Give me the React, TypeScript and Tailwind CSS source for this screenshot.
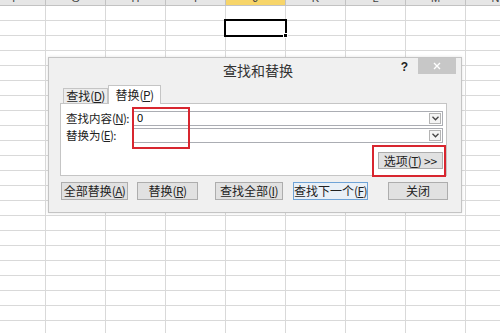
import React from "react";

const cols = ["F", "G", "H", "I", "J", "K", "L", "M", "N"];
const rows = Array.from({ length: 22 }, (_, i) => i);

const Key = ({ k }: { k: string }) => (
  <span className="tracking-[-0.6px]">
    (<span className="underline">{k}</span>)
  </span>
);

const DropBtn = () => (
  <div className="ml-auto mr-[1px] flex h-[11px] w-[12px] shrink-0 items-center justify-center border border-[#b4b4b4] bg-[#f4f4f4]">
    <svg width="7" height="5" viewBox="0 0 7 5">
      <path d="M0.5 0.8 L3.5 3.8 L6.5 0.8" fill="none" stroke="#444" strokeWidth="1.3" />
    </svg>
  </div>
);

const Btn = ({
  w,
  ml,
  primary,
  children,
}: {
  w: string;
  ml?: string;
  primary?: boolean;
  children: React.ReactNode;
}) => (
  <div
    className={`flex h-[18px] shrink-0 items-center justify-center whitespace-nowrap border text-[12px] leading-none text-[#222] ${w} ${ml ?? ""} ${
      primary ? "border-[#6fa3d6] bg-[#e9f0f7]" : "border-[#adadad] bg-[#e1e1e1]"
    }`}
  >
    {children}
  </div>
);

export default function App() {
  return (
    <div className="relative h-[333px] w-[500px] overflow-hidden bg-white font-['Noto_Sans_CJK_SC','Liberation_Sans',sans-serif]">
      {/* sheet */}
      <div className="ml-[-14px] mt-[-14px] flex flex-col">
        <div className="flex">
          {cols.map((c) => (
            <div
              key={c}
              className={`flex h-5 w-[60px] shrink-0 items-end justify-center border-r border-b border-[#c2c2c2] pb-[1px] font-['Liberation_Sans',sans-serif] text-[11px] leading-none text-[#444] ${
                c === "J" ? "bg-[#f7d56a]" : "bg-[#e6e6e6]"
              }`}
            >
              {c}
            </div>
          ))}
        </div>
        {rows.map((r) => (
          <div key={r} className="flex">
            {cols.map((c) => (
              <div key={c} className="h-[15px] w-[60px] shrink-0 border-r border-b border-[#d9d9d9]" />
            ))}
          </div>
        ))}
      </div>

      {/* active cell */}
      <div className="absolute left-[224px] top-[19px] h-[18px] w-[63px] border-2 border-black">
        <div className="absolute bottom-[-3px] right-[-3px] h-[5px] w-[5px] border border-white bg-black" />
      </div>

      {/* dialog */}
      <div className="absolute left-[48px] top-[57px] flex h-[156px] w-[414px] flex-col border border-[#c4c4c4] bg-[#f0f0f0] shadow-[0_0_3px_rgba(0,0,0,0.12)]">
        <div className="flex h-[24px] shrink-0">
          <div className="flex-1" />
          <div className="whitespace-nowrap pl-[6px] pt-[3px] text-[14px] leading-[18px] text-[#333]">查找和替换</div>
          <div className="flex flex-1 justify-end">
            <span className="mr-[10px] mt-[3px] font-['Liberation_Sans',sans-serif] text-[12px] font-bold leading-none text-[#222]">
              ?
            </span>
            <div className="mr-[5px] flex h-[16px] w-[38px] items-center justify-center bg-[#c7c7c7]">
              <svg width="8" height="8" viewBox="0 0 8 8">
                <path d="M1 1 L7 7 M7 1 L1 7" stroke="#fff" strokeWidth="1.4" />
              </svg>
            </div>
          </div>
        </div>

        <div className="ml-[11px] mt-[3px] flex w-[387px] flex-col">
          <div className="flex items-end pl-[3px]">
            <div className="flex h-[15px] w-[45px] items-center justify-center whitespace-nowrap border border-b-0 border-[#c5c5c5] bg-[#ececec] text-[12px] leading-none text-[#222]">
              查找<Key k="D" />
            </div>
            <div className="relative z-10 mb-[-1px] flex h-[19px] w-[53px] items-center justify-center whitespace-nowrap border border-b-0 border-[#c5c5c5] bg-white text-[12px] leading-none text-[#222]">
              替换<Key k="P" />
            </div>
          </div>

          <div className="flex h-[73px] flex-col border border-[#c5c5c5] bg-white">
            <div className="mt-[7px] flex h-[15px] items-center">
              <span className="w-[72px] shrink-0 whitespace-nowrap pl-[5px] text-[11.5px] leading-none text-[#222]">
                查找内容<Key k="N" />:
              </span>
              <div className="flex h-[15px] w-[310px] items-center border border-[#abadb3] bg-white">
                <span className="pl-[3px] font-['Liberation_Sans',sans-serif] text-[11px] leading-none text-black">0</span>
                <DropBtn />
              </div>
            </div>
            <div className="mt-[2px] flex h-[15px] items-center">
              <span className="w-[72px] shrink-0 whitespace-nowrap pl-[5px] text-[11.5px] leading-none text-[#222]">
                替换为<Key k="E" />:
              </span>
              <div className="flex h-[15px] w-[310px] items-center border border-[#abadb3] bg-white">
                <DropBtn />
              </div>
            </div>
            <div className="mr-[3px] mt-[9px] flex self-end">
              <div className="flex h-[17px] w-[65px] items-center justify-center whitespace-nowrap border border-[#adadad] bg-[#e1e1e1] text-[12px] leading-none text-[#222]">
                选项<Key k="T" />&nbsp;&gt;&gt;
              </div>
            </div>
          </div>
        </div>

        <div className="ml-[12px] mt-[6px] flex">
          <Btn w="w-[67px]">
            全部替换<Key k="A" />
          </Btn>
          <Btn w="w-[61px]" ml="ml-[9px]">
            替换<Key k="R" />
          </Btn>
          <Btn w="w-[68px]" ml="ml-[17px]">
            查找全部<Key k="I" />
          </Btn>
          <Btn w="w-[75px]" ml="ml-[10px]" primary>
            查找下一个<Key k="F" />
          </Btn>
          <Btn w="w-[60px]" ml="ml-[20px]">
            关闭
          </Btn>
        </div>
      </div>

      {/* red annotation boxes */}
      <div className="absolute left-[132px] top-[107px] h-[42px] w-[58px] border-2 border-[#d8262f]" />
      <div className="absolute left-[372px] top-[145px] h-[32px] w-[74px] border-2 border-[#d8262f]" />
    </div>
  );
}
